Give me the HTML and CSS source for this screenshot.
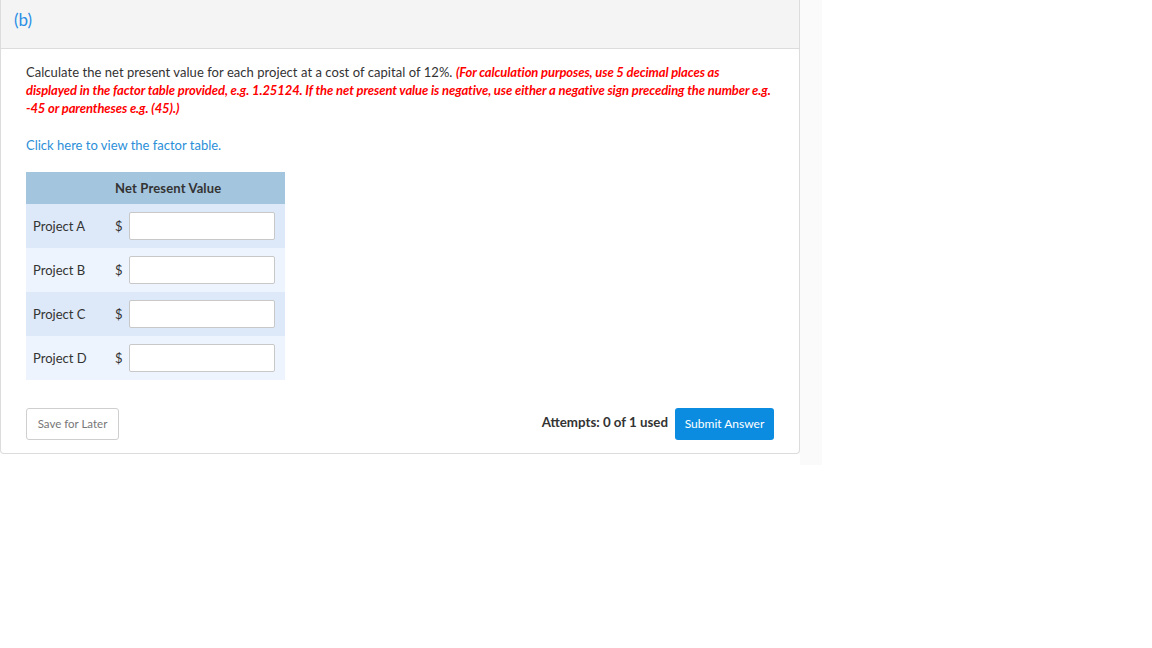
FILE: index.html
```html
<!DOCTYPE html>
<html>
<head>
<meta charset="utf-8">
<link rel="stylesheet" href="styles.css">
</head>
<body>
<div class="page">
  <div class="panel">
    <div class="panel-head"><span class="part">(b)</span></div>
    <div class="panel-body">
      <p class="question">Calculate the net present value for each project at a cost of capital of 12%. <em class="note">(For calculation purposes, use 5 decimal places as<br>displayed in the factor table provided, e.g. 1.25124. If the net present value is negative, use either a negative sign preceding the number e.g.<br>-45 or parentheses e.g. (45).)</em></p>
      <p class="link-row"><a class="link" href="#">Click here to view the factor table.</a></p>
      <div class="npv-table">
        <div class="npv-head">Net Present Value</div>
        <div class="npv-row dark"><span class="label">Project A</span><span class="dollar">$</span><input class="field" type="text"></div>
        <div class="npv-row light"><span class="label">Project B</span><span class="dollar">$</span><input class="field" type="text"></div>
        <div class="npv-row dark"><span class="label">Project C</span><span class="dollar">$</span><input class="field" type="text"></div>
        <div class="npv-row light"><span class="label">Project D</span><span class="dollar">$</span><input class="field" type="text"></div>
      </div>
      <div class="actions">
        <button class="btn-save">Save for Later</button>
        <div class="submit-group">
          <span class="attempts">Attempts: 0 of 1 used</span>
          <button class="btn-submit">Submit Answer</button>
        </div>
      </div>
    </div>
  </div>
  <div class="side"></div>
</div>
</body>
</html>
```

FILE: styles.css
```css
html, body {
  margin: 0;
  padding: 0;
  background: #fff;
}
body {
  font-family: Lato, "Open Sans", Arial, sans-serif;
  font-size: 13px;
  color: #333;
}
.page {
  display: flex;
  align-items: flex-start;
}
.panel {
  width: 798px;
  border: 1px solid #dcdcdc;
  border-top: none;
  border-radius: 0 0 4px 4px;
  background: #fff;
}
.panel-head {
  height: 49px;
  background: #f4f4f4;
  border-bottom: 1px solid #dcdcdc;
  padding-left: 13px;
  box-sizing: border-box;
  padding-top: 9px;
}
.part {
  font-size: 17px;
  color: #2a8ee6;
  font-weight: 400;
}
.panel-body {
  padding: 14px 25px 13px 25px;
}
.question {
  margin: 0;
  line-height: 18px;
  letter-spacing: 0.05px;
  white-space: nowrap;
}
.note {
  color: #f00;
  font-weight: 700;
  font-style: italic;
  letter-spacing: -0.1px;
}
.link-row {
  margin: 19px 0 0 0;
  line-height: 18px;
}
.link {
  color: #2b8fd8;
  text-decoration: none;
}
.npv-table {
  width: 259px;
  margin-top: 18px;
}
.npv-head {
  height: 32px;
  line-height: 32px;
  background: #a4c5de;
  padding-left: 89px;
  font-weight: 700;
  color: #333;
  letter-spacing: 0.15px;
}
.npv-row {
  height: 44px;
  display: flex;
  align-items: center;
  padding-left: 7px;
}
.npv-row.dark { background: #dde8f8; }
.npv-row.light { background: #edf4fd; }
.label {
  width: 82px;
}
.dollar {
  width: 14px;
}
.field {
  width: 146px;
  height: 28px;
  box-sizing: border-box;
  border: 1px solid #c8c8c8;
  border-radius: 2px;
  background: #fff;
  margin: 0;
  padding: 0 4px;
}
.actions {
  margin-top: 28px;
  display: flex;
  justify-content: space-between;
  align-items: center;
}
.btn-save {
  width: 93px;
  height: 32px;
  border: 1px solid #cfcfcf;
  border-radius: 3px;
  background: #fff;
  color: #777;
  font-family: Lato, Arial, sans-serif;
  font-size: 11.5px;
  padding: 0 0 2px 0;
}
.submit-group {
  display: flex;
  align-items: center;
  gap: 7px;
}
.attempts {
  font-weight: 700;
  font-size: 13.3px;
  color: #333;
  margin-top: -4px;
}
.btn-submit {
  width: 99px;
  height: 32px;
  border: none;
  border-radius: 3px;
  background: #0b8ce0;
  color: #fff;
  font-family: Lato, Arial, sans-serif;
  font-size: 12px;
  font-weight: 400;
  padding: 0 0 2px 0;
}
.side {
  width: 22px;
  height: 465px;
  background: #fafafa;
}
```
